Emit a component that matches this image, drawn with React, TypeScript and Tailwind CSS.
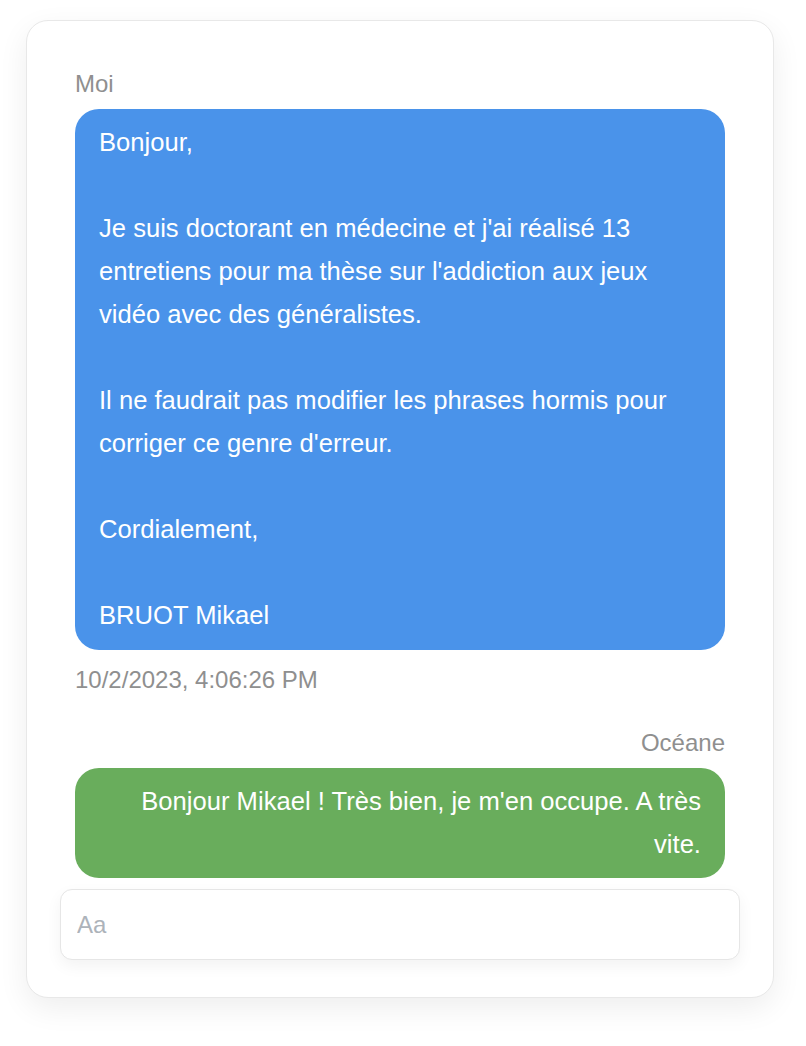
import { useState } from 'react'

type Message = {
    author: string
    mine: boolean
    text: string
    time?: string
}

const messages: Message[] = [
    {
        author: 'Moi',
        mine: true,
        text: "Bonjour,\n\nJe suis doctorant en médecine et j'ai réalisé 13 entretiens pour ma thèse sur l'addiction aux jeux vidéo avec des généralistes.\n\nIl ne faudrait pas modifier les phrases hormis pour corriger ce genre d'erreur.\n\nCordialement,\n\nBRUOT Mikael",
        time: '10/2/2023, 4:06:26 PM',
    },
    {
        author: 'Océane',
        mine: false,
        text: "Bonjour Mikael ! Très bien, je m'en occupe. A très vite.",
    },
]

const App = () => {
    const [draft, setDraft] = useState<string>('')

    return (
        <div className="min-h-screen bg-white pt-[20px] font-['Liberation_Sans',Arial,sans-serif]">
            <div className="ml-[26px] w-[748px] h-[978px] rounded-[22px] border border-[#e8e8e8] bg-white shadow-[0_10px_30px_rgba(0,0,0,0.07)] flex flex-col">
                <div className="px-[48px] pt-[51px] flex flex-col">
                    {messages.map((m, i) => (
                        <div
                            key={i}
                            className={m.mine ? 'flex flex-col' : 'flex flex-col mt-[39px]'}
                        >
                            <p
                                className={
                                    m.mine
                                        ? 'text-[24px] leading-[24px] text-[#8f8f8f] mb-[13px]'
                                        : 'text-[24px] leading-[24px] text-[#8f8f8f] mb-[13px] text-right'
                                }
                            >
                                {m.author}
                            </p>
                            <div
                                className={
                                    m.mine
                                        ? 'rounded-[24px] bg-[#4a93ea] text-white text-[25.6px] leading-[43px] px-[24px] pt-[12px] pb-[13px] whitespace-pre-wrap'
                                        : 'rounded-[24px] bg-[#69ad5c] text-white text-[25.6px] leading-[43px] px-[24px] pt-[12px] pb-[12px] whitespace-pre-wrap text-right'
                                }
                            >
                                {m.text}
                            </div>
                            {m.time && (
                                <p className="mt-[18px] text-[24px] leading-[24px] text-[#8f8f8f]">
                                    {m.time}
                                </p>
                            )}
                        </div>
                    ))}
                </div>
                <div className="px-[33px] mt-[11px]">
                    <input
                        type="text"
                        value={draft}
                        onChange={(e) => setDraft(e.target.value)}
                        placeholder="Aa"
                        className="w-full h-[71px] rounded-[12px] border border-[#e6e6e6] bg-white px-[16px] text-[24px] text-[#333] placeholder:text-[#adb3ba] shadow-[0_6px_16px_rgba(0,0,0,0.05)] outline-none"
                    />
                </div>
            </div>
        </div>
    )
}

export default App
